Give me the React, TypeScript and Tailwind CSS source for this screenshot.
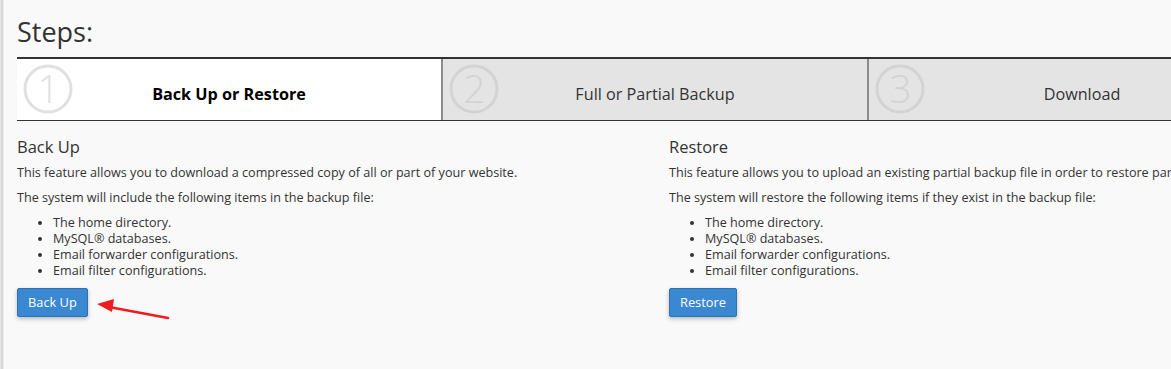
import React from "react";

const font = { fontFamily: '"Open Sans", "Noto Sans", Arial, sans-serif' };

function Circle({ n, active }: { n: string; active?: boolean }) {
  const c = active ? "#e0e0e0" : "#d3d3d3";
  return (
    <svg width="60" height="61" viewBox="0 0 60 61" className="absolute left-[1px] top-0">
      <circle cx="30" cy="30" r="23" fill="none" stroke={c} strokeWidth="3" />
      <text x="30.5" y="44" textAnchor="middle" fontSize="39" fill={c} fontFamily='"Open Sans", sans-serif' fontWeight="300">
        {n}
      </text>
    </svg>
  );
}

function Step({ n, label, active, last }: { n: string; label: string; active?: boolean; last?: boolean }) {
  return (
    <div
      className={`relative w-[426px] shrink-0 h-[61px] flex items-center justify-center ${active ? "bg-white" : "bg-[#e4e4e4]"} ${last ? "" : "border-r-2 border-[#8c8c8c]"}`}
    >
      <Circle n={n} active={active} />
      <span className={`relative text-[16.2px] pt-[10px] ${active ? "font-bold text-black" : "text-[#333]"}`}>{label}</span>
    </div>
  );
}

function Section({ title, p1, p2, button }: { title: string; p1: string; p2: string; button: string }) {
  return (
    <div className="w-[652px] shrink-0">
      <h4 className="text-[16.5px] leading-[22px] text-[#333] mt-[15px]">{title}</h4>
      <p className="text-[12.6px] leading-[17px] text-[#333] mt-[6px] whitespace-nowrap">{p1}</p>
      <p className="text-[12.6px] leading-[17px] text-[#333] mt-[8px] whitespace-nowrap">{p2}</p>
      <ul className="list-disc pl-[36px] text-[12.6px] leading-[16px] text-[#333] mt-[9px]">
        <li>The home directory.</li>
        <li>MySQL® databases.</li>
        <li>Email forwarder configurations.</li>
        <li>Email filter configurations.</li>
      </ul>
      <button className="mt-[9px] h-[29px] px-[10px] rounded-[2px] bg-[#3a88d2] border border-[#2d72b4] text-white text-[12.8px] shadow-[0_2px_4px_rgba(0,0,0,0.25)]">
        {button}
      </button>
    </div>
  );
}

export default function App() {
  return (
    <div className="w-[1171px] h-[369px] overflow-hidden bg-[#f9f9f9] flex relative" style={font}>
      <div className="w-[4px] shrink-0 flex">
        <div className="w-[1px] bg-[#e4e4e4]" />
        <div className="w-[2px] bg-[#d9d9d9]" />
        <div className="w-[1px] bg-[#ececec]" />
      </div>
      <div className="pl-[13px] flex-1 min-w-0">
        <h2 className="text-[27px] leading-[36px] text-[#333] pt-[14px] mb-[7px]">Steps:</h2>
        <div className="flex border-t-2 border-b border-[#333] w-[1300px]">
          <Step n="1" label="Back Up or Restore" active />
          <Step n="2" label="Full or Partial Backup" />
          <Step n="3" label="Download" last />
        </div>
        <div className="flex w-[1400px]">
          <Section
            title="Back Up"
            p1="This feature allows you to download a compressed copy of all or part of your website."
            p2="The system will include the following items in the backup file:"
            button="Back Up"
          />
          <Section
            title="Restore"
            p1="This feature allows you to upload an existing partial backup file in order to restore parts of your website."
            p2="The system will restore the following items if they exist in the backup file:"
            button="Restore"
          />
        </div>
      </div>
      <svg className="absolute left-[95px] top-[296px]" width="80" height="28" viewBox="0 0 80 28">
        <line x1="73" y1="22" x2="14" y2="11" stroke="#ee1c1c" strokeWidth="2.5" strokeLinecap="round" />
        <polygon points="2,8 19,3 17,16" fill="#ee1c1c" />
      </svg>
    </div>
  );
}
